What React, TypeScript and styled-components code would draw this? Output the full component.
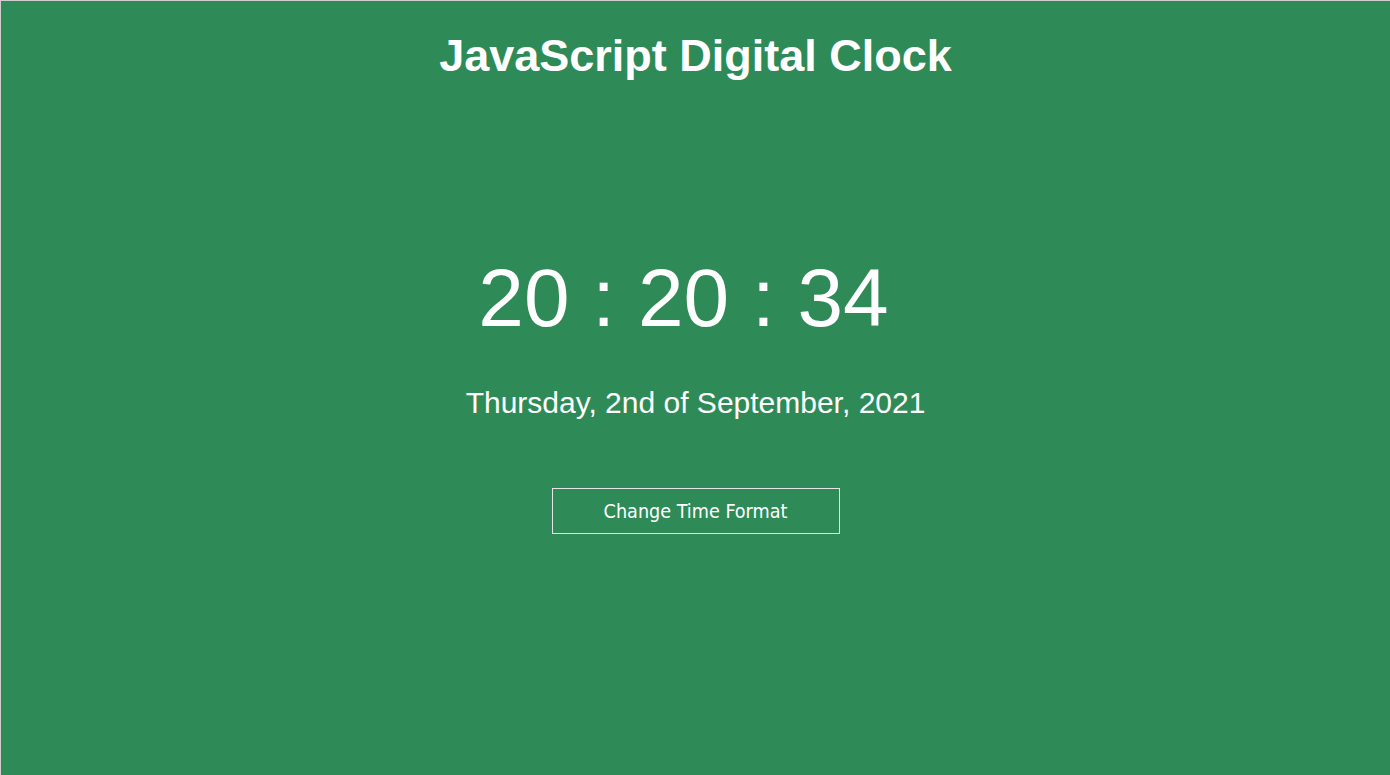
import * as React from 'react'
import styled, { createGlobalStyle } from 'styled-components'

const GlobalStyle = createGlobalStyle`
  html, body {
    margin: 0;
    padding: 0;
  }
  body {
    background: seagreen;
    font-family: 'Liberation Sans', Arial, sans-serif;
  }
`

const Page = styled.div`
  box-sizing: border-box;
  min-height: 775px;
  display: flex;
  flex-direction: column;
  align-items: center;
  background: seagreen;
  color: #fff;
  border-top: 1px solid #cfcfcf;
  border-left: 1px solid #cfcfcf;
  padding-top: 29px;
`

const Title = styled.h1`
  margin: 0;
  font-size: 45px;
  font-weight: bold;
  line-height: normal;
`

const Time = styled.div`
  margin-top: 169px;
  font-size: 82px;
  line-height: normal;
  padding-right: 24px;
  white-space: pre;
`

const DateLine = styled.div`
  margin-top: 41px;
  font-size: 30px;
  line-height: normal;
`

const FormatButton = styled.button`
  margin-top: 68px;
  width: 288px;
  height: 46px;
  background: transparent;
  border: 1px solid #e6e6e6;
  color: #fff;
  font-family: 'DejaVu Sans Condensed', 'DejaVu Sans', sans-serif;
  font-size: 19.6px;
  padding-top: 1px;
  cursor: pointer;
`

export default function App() {
  const [h24, setH24] = React.useState(true)
  const time = h24 ? '20 : 20 : 34' : '08 : 20 : 34'
  return (
    <>
      <GlobalStyle />
      <Page>
        <Title>JavaScript Digital Clock</Title>
        <Time>{time}</Time>
        <DateLine>Thursday, 2nd of September, 2021</DateLine>
        <FormatButton onClick={() => setH24(!h24)}>Change Time Format</FormatButton>
      </Page>
    </>
  )
}
